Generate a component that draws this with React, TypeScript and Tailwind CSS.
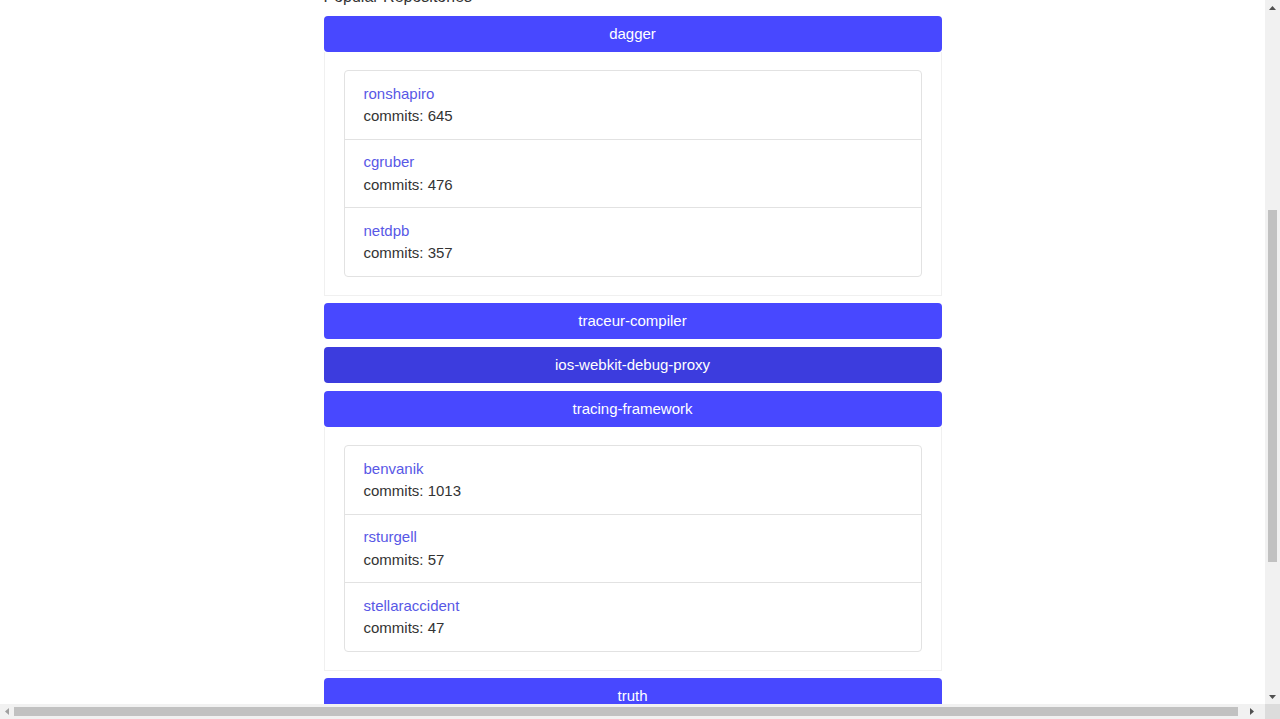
import React from "react";

type Contributor = { name: string; commits: number };
type Repo = { name: string; open?: boolean; hover?: boolean; contributors?: Contributor[] };

const repos: Repo[] = [
  {
    name: "dagger",
    open: true,
    contributors: [
      { name: "ronshapiro", commits: 645 },
      { name: "cgruber", commits: 476 },
      { name: "netdpb", commits: 357 },
    ],
  },
  { name: "traceur-compiler" },
  { name: "ios-webkit-debug-proxy", hover: true },
  {
    name: "tracing-framework",
    open: true,
    contributors: [
      { name: "benvanik", commits: 1013 },
      { name: "rsturgell", commits: 57 },
      { name: "stellaraccident", commits: 47 },
    ],
  },
  { name: "truth" },
];

function RepoItem({ repo }: { repo: Repo }) {
  return (
    <div className="mb-2">
      <div
        className={
          "h-[36px] flex items-center justify-center rounded-[4px] text-white text-[15px] " +
          (repo.hover ? "bg-[#3c3cde]" : "bg-[#4848ff]")
        }
      >
        {repo.name}
      </div>
      {repo.open && repo.contributors && (
        <div className="border-x border-b border-[#f0f0f0] pt-[18px] pb-[18.5px] px-[19px] -mb-px">
          <div className="border border-[#e2e2e2] rounded-[4px] bg-white">
            {repo.contributors.map((c, i) => (
              <div
                key={c.name}
                className={
                  "px-[19px] pt-[11.5px] pb-[11px] leading-[22.5px] " +
                  (i > 0 ? "border-t border-[#e2e2e2]" : "")
                }
              >
                <div className="text-[#5858e6]">{c.name}</div>
                <div className="text-[#333333]">commits: {c.commits}</div>
              </div>
            ))}
          </div>
        </div>
      )}
    </div>
  );
}

export default function App() {
  return (
    <div
      className="w-[1280px] h-[719px] flex flex-col overflow-hidden bg-white"
      style={{ fontFamily: '"Liberation Sans", Arial, sans-serif' }}
    >
      <div className="flex flex-1 min-h-0">
        <div className="flex-1 overflow-hidden">
          <div className="w-[618px] mx-auto -mt-[14px] text-[15px]">
            <div className="text-[#333333] text-[16px] leading-[22px] mb-2">Popular Repositories</div>
            {repos.map((r) => (
              <RepoItem key={r.name} repo={r} />
            ))}
          </div>
        </div>
        <div className="w-[15px] bg-[#f1f1f1] flex flex-col items-center">
          <div className="h-[15px] flex items-center justify-center">
            <svg width="7" height="4" viewBox="0 0 7 4">
              <polygon points="3.5,0 7,4 0,4" fill="#505050" />
            </svg>
          </div>
          <div className="h-[195px]" />
          <div className="w-[9px] h-[352px] bg-[#c1c1c1]" />
          <div className="flex-1" />
          <div className="h-[15px] flex items-center justify-center">
            <svg width="7" height="4" viewBox="0 0 7 4">
              <polygon points="0,0 7,0 3.5,4" fill="#505050" />
            </svg>
          </div>
        </div>
      </div>
      <div className="h-[15px] flex">
        <div className="flex-1 bg-[#f1f1f1] flex items-center">
          <div className="w-[14px] h-[15px] flex items-center justify-center">
            <svg width="4" height="7" viewBox="0 0 4 7">
              <polygon points="4,0 4,7 0,3.5" fill="#a0a0a0" />
            </svg>
          </div>
          <div className="w-[1224px] h-[9px] bg-[#c1c1c1]" />
          <div className="flex-1 h-[15px] flex items-center justify-center">
            <svg width="4" height="7" viewBox="0 0 4 7">
              <polygon points="0,0 4,3.5 0,7" fill="#505050" />
            </svg>
          </div>
        </div>
        <div className="w-[15px] bg-[#dcdcdc]" />
      </div>
    </div>
  );
}
